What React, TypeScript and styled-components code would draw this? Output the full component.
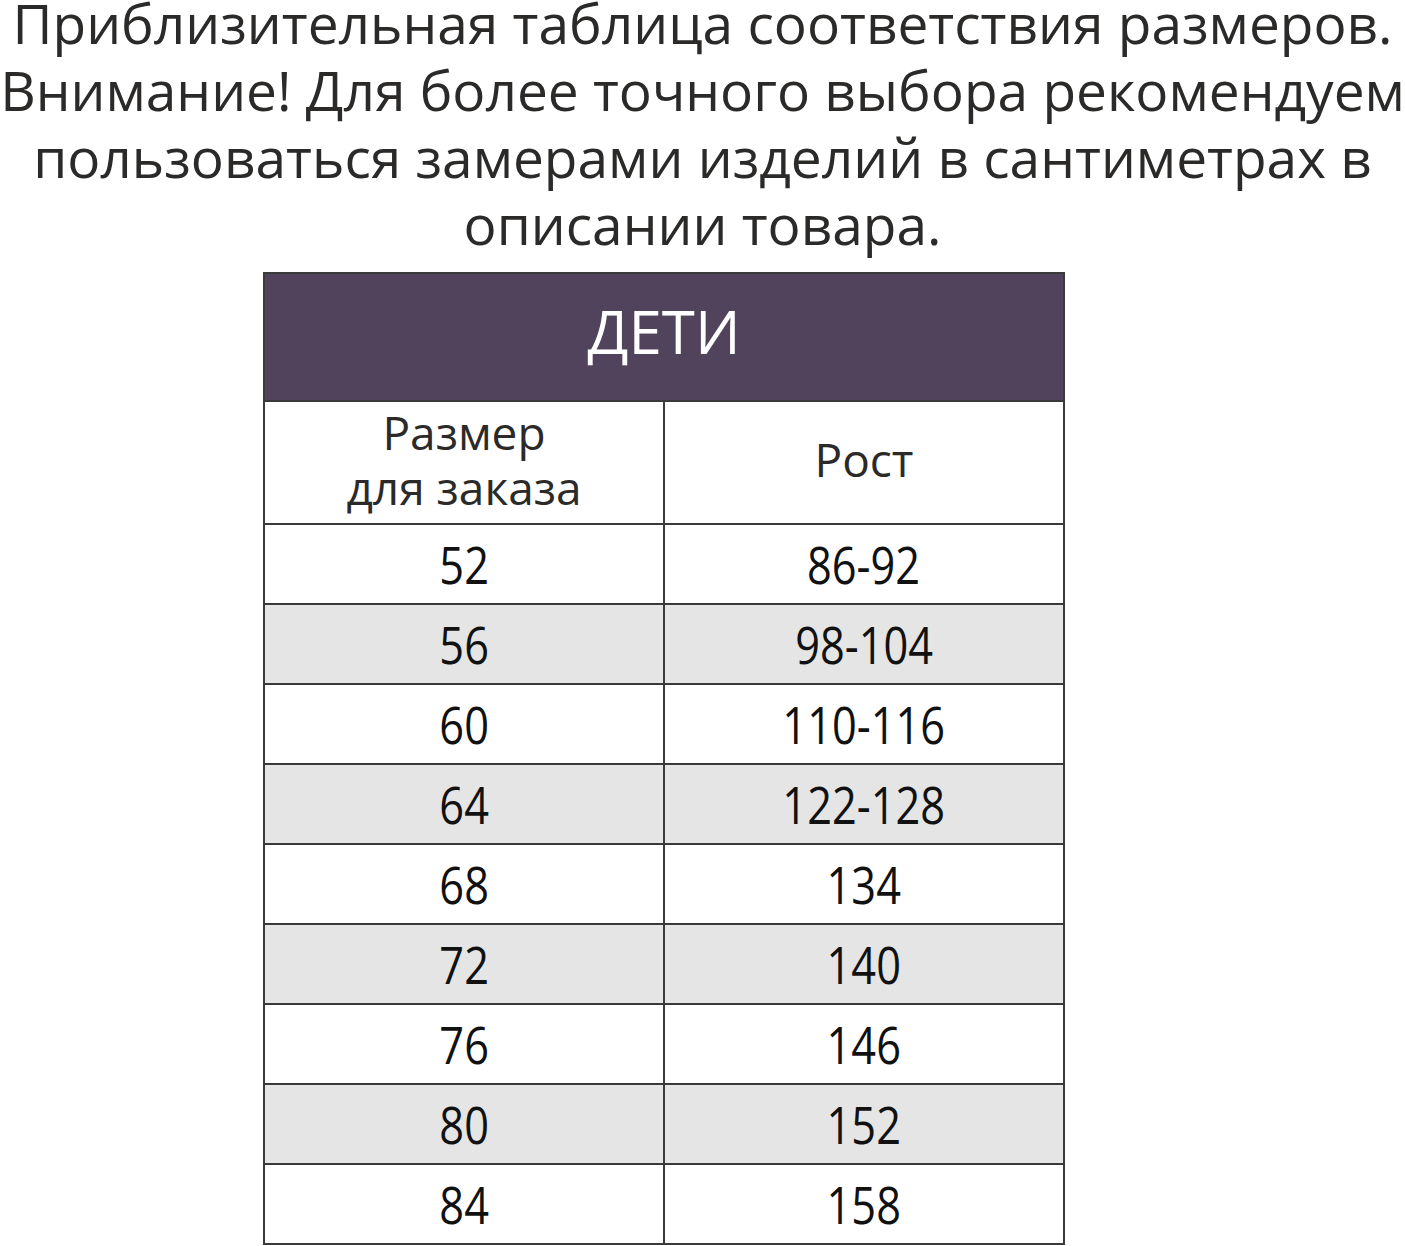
import React from "react";
import styled, { createGlobalStyle } from "styled-components";

const Global = createGlobalStyle`
  html, body { margin: 0; padding: 0; background: #ffffff; }
  body { font-family: "Open Sans", "Noto Sans", sans-serif; overflow: hidden; }
`;

const Page = styled.div`
  width: 1405px;
  height: 1246px;
  overflow: hidden;
  display: flex;
  flex-direction: column;
`;

const Title = styled.div`
  display: flex;
  flex-direction: column;
  align-items: center;
  color: #2b2a29;
  font-size: 55px;
  line-height: 67px;
  margin-top: -11px;
`;

const TitleLine = styled.div`
  white-space: nowrap;
`;

const Table = styled.table`
  margin-top: 15px;
  margin-left: 263px;
  width: 802px;
  border-collapse: collapse;
  table-layout: fixed;
`;

const HeadCell = styled.th`
  background: #52435c;
  color: #ffffff;
  font-weight: 400;
  font-size: 60px;
  height: 114px;
  padding: 0 0 12px;
  border: 2px solid #3a3a3a;
  text-align: center;
  vertical-align: middle;
`;

const ColCell = styled.td`
  color: #2b2a29;
  font-size: 46px;
  line-height: 55px;
  height: 115px;
  padding: 0 0 6px;
  border: 2px solid #3a3a3a;
  text-align: center;
  vertical-align: middle;
`;

const Cell = styled.td<{ $shade: boolean }>`
  background: ${(p) => (p.$shade ? "#e4e5e4" : "#ffffff")};
  color: #111111;
  font-size: 51px;
  height: 78px;
  padding: 0;
  border: 2px solid #3a3a3a;
  text-align: center;
  vertical-align: middle;
`;

const Num = styled.span`
  display: inline-block;
  transform: scaleX(0.85);
`;

const rows: [string, string][] = [
  ["52", "86-92"],
  ["56", "98-104"],
  ["60", "110-116"],
  ["64", "122-128"],
  ["68", "134"],
  ["72", "140"],
  ["76", "146"],
  ["80", "152"],
  ["84", "158"],
];

export default function App() {
  return (
    <Page>
      <Global />
      <Title>
        <TitleLine>Приблизительная таблица соответствия размеров.</TitleLine>
        <TitleLine>Внимание! Для более точного выбора рекомендуем</TitleLine>
        <TitleLine>пользоваться замерами изделий в сантиметрах в</TitleLine>
        <TitleLine>описании товара.</TitleLine>
      </Title>
      <Table>
        <thead>
          <tr>
            <HeadCell colSpan={2}>ДЕТИ</HeadCell>
          </tr>
        </thead>
        <tbody>
          <tr>
            <ColCell>
              Размер
              <br />
              для заказа
            </ColCell>
            <ColCell>Рост</ColCell>
          </tr>
          {rows.map(([size, height], i) => (
            <tr key={size}>
              <Cell $shade={i % 2 === 1}>
                <Num>{size}</Num>
              </Cell>
              <Cell $shade={i % 2 === 1}>
                <Num>{height}</Num>
              </Cell>
            </tr>
          ))}
        </tbody>
      </Table>
    </Page>
  );
}
